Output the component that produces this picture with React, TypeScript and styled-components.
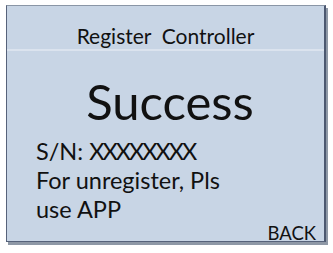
import { createGlobalStyle } from 'styled-components';
import styled from 'styled-components';

const GlobalStyle = createGlobalStyle`
    html, body {
        margin: 0;
        padding: 0;
        background: #ffffff;
    }
`;

const Page = styled.div`
    padding: 5px 0 0 6px;
    width: 333px;
    height: 253px;
    box-sizing: border-box;
    font-family: Lato, 'Open Sans', sans-serif;
    color: #111111;
`;

const Screen = styled.div`
    display: flex;
    flex-direction: column;
    width: 320px;
    height: 237px;
    box-sizing: border-box;
    background: #c8d5e5;
    border-top: 1px solid #8a96a6;
    border-left: 1px solid #56627a;
    border-right: 2px solid #4c5870;
    border-bottom: 1px solid #56627a;
    box-shadow: 2px 3px 0 #8e98a6;
`;

const Header = styled.div`
    height: 46px;
    padding-top: 17px;
    box-sizing: border-box;
    font-size: 21px;
    line-height: 26px;
    text-align: center;
    border-bottom: 2px solid #dbe3ee;
    white-space: pre;
`;

const Body = styled.div`
    flex: 1;
    display: flex;
    flex-direction: column;
    padding: 0 8px 0 29px;
`;

const Title = styled.div`
    font-size: 49px;
    line-height: 58px;
    margin: 21px 0 7px -12px;
    text-align: center;
`;

const InfoLine = styled.div`
    font-size: 23.5px;
    line-height: 29px;
`;

const Serial = styled.span`
    letter-spacing: -2px;
`;

const BackButton = styled.div`
    margin-top: auto;
    align-self: flex-end;
    font-size: 18.5px;
    line-height: 18px;
`;

export default function App() {
    return (
        <Page>
            <GlobalStyle />
            <Screen>
                <Header>{'Register  Controller'}</Header>
                <Body>
                    <Title>Success</Title>
                    <InfoLine>
                        S/N: <Serial>XXXXXXXX</Serial>
                    </InfoLine>
                    <InfoLine>For unregister, Pls</InfoLine>
                    <InfoLine>use APP</InfoLine>
                    <BackButton>BACK</BackButton>
                </Body>
            </Screen>
        </Page>
    );
}
